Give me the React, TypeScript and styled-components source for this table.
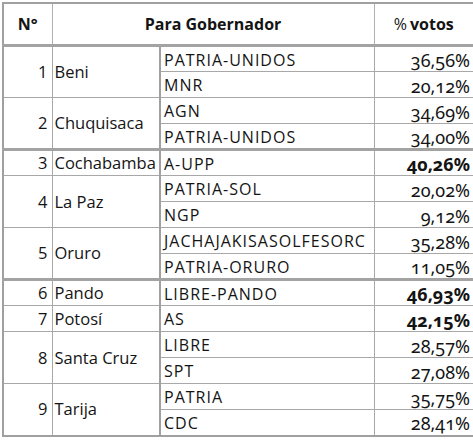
import React from "react";
import styled, { createGlobalStyle } from "styled-components";

const GlobalStyle = createGlobalStyle`
  html, body {
    margin: 0;
    background: #ffffff;
  }
  body {
    font-family: "Open Sans", "Liberation Sans", sans-serif;
    color: #141414;
  }
`;

const Page = styled.div`
  padding: 2px 0 0 2px;
`;

const Table = styled.table`
  border-collapse: collapse;
  table-layout: fixed;
  width: 471px;
  border: 2px solid #a0a0a0;
`;

const Col = styled.col<{ $w: number }>`
  width: ${(p) => p.$w}px;
`;

const HeadCell = styled.th`
  height: 40px;
  padding: 0;
  font-size: 16px;
  line-height: 20px;
  font-weight: 700;
  text-align: center;
  border: 1px solid #b0b0b0;
  border-bottom: 3px solid #a3a3a3;
`;

const Pct = styled.span`
  font-weight: 400;
  margin-right: 3px;
`;

const Row = styled.tr<{ $thickTop?: boolean }>`
  height: 26px;
  & > td {
    border-top: ${(p) => (p.$thickTop ? "3px solid #a3a3a3" : "1px solid #a8a8a8")};
  }
`;

const NumCell = styled.td`
  padding: 0 4px 0 0;
  text-align: right;
  font-size: 16.5px;
  line-height: 20px;
  border-left: 1px solid #a8a8a8;
  border-right: 1px solid #a8a8a8;
`;

const NameCell = styled.td`
  padding: 0 0 0 2px;
  font-size: 16.5px;
  line-height: 20px;
  white-space: nowrap;
  border-right: 2px solid #a0a0a0;
`;

const PartyCell = styled.td`
  padding: 1px 0 0 3px;
  font-size: 16px;
  line-height: 20px;
  letter-spacing: 1px;
  white-space: nowrap;
  border-right: 1px solid #a8a8a8;
`;

const VoteCell = styled.td<{ $bold?: boolean }>`
  padding: 2px 3px 0 0;
  text-align: right;
  font-family: "Noto Sans", "Lato", sans-serif;
  font-size: 18px;
  line-height: 20px;
  font-weight: ${(p) => (p.$bold ? 700 : 400)};
  font-variant-numeric: oldstyle-nums;
`;

interface IParty {
  name: string;
  vote: string;
  bold?: boolean;
}

interface IDept {
  n: number;
  name: string;
  parties: IParty[];
  thickTop?: boolean;
}

const depts: IDept[] = [
  {
    n: 1,
    name: "Beni",
    parties: [
      { name: "PATRIA-UNIDOS", vote: "36,56%" },
      { name: "MNR", vote: "20,12%" },
    ],
  },
  {
    n: 2,
    name: "Chuquisaca",
    parties: [
      { name: "AGN", vote: "34,69%" },
      { name: "PATRIA-UNIDOS", vote: "34,00%" },
    ],
  },
  {
    n: 3,
    name: "Cochabamba",
    thickTop: true,
    parties: [{ name: "A-UPP", vote: "40,26%", bold: true }],
  },
  {
    n: 4,
    name: "La Paz",
    parties: [
      { name: "PATRIA-SOL", vote: "20,02%" },
      { name: "NGP", vote: "9,12%" },
    ],
  },
  {
    n: 5,
    name: "Oruro",
    parties: [
      { name: "JACHAJAKISASOLFESORC", vote: "35,28%" },
      { name: "PATRIA-ORURO", vote: "11,05%" },
    ],
  },
  {
    n: 6,
    name: "Pando",
    thickTop: true,
    parties: [{ name: "LIBRE-PANDO", vote: "46,93%", bold: true }],
  },
  {
    n: 7,
    name: "Potosí",
    parties: [{ name: "AS", vote: "42,15%", bold: true }],
  },
  {
    n: 8,
    name: "Santa Cruz",
    parties: [
      { name: "LIBRE", vote: "28,57%" },
      { name: "SPT", vote: "27,08%" },
    ],
  },
  {
    n: 9,
    name: "Tarija",
    parties: [
      { name: "PATRIA", vote: "35,75%" },
      { name: "CDC", vote: "28,41%" },
    ],
  },
];

const App = () => {
  return (
    <Page>
      <GlobalStyle />
      <Table>
        <colgroup>
          <Col $w={49} />
          <Col $w={108} />
          <Col $w={214} />
          <Col $w={100} />
        </colgroup>
        <thead>
          <tr>
            <HeadCell>N°</HeadCell>
            <HeadCell colSpan={2}>Para Gobernador</HeadCell>
            <HeadCell>
              <Pct>%</Pct>votos
            </HeadCell>
          </tr>
        </thead>
        <tbody>
          {depts.map((d) =>
            d.parties.map((p, i) => (
              <Row key={d.n + p.name} $thickTop={i === 0 && d.thickTop}>
                {i === 0 && (
                  <>
                    <NumCell rowSpan={d.parties.length}>{d.n}</NumCell>
                    <NameCell rowSpan={d.parties.length}>{d.name}</NameCell>
                  </>
                )}
                <PartyCell>{p.name}</PartyCell>
                <VoteCell $bold={p.bold}>{p.vote}</VoteCell>
              </Row>
            ))
          )}
        </tbody>
      </Table>
    </Page>
  );
};

export default App;
